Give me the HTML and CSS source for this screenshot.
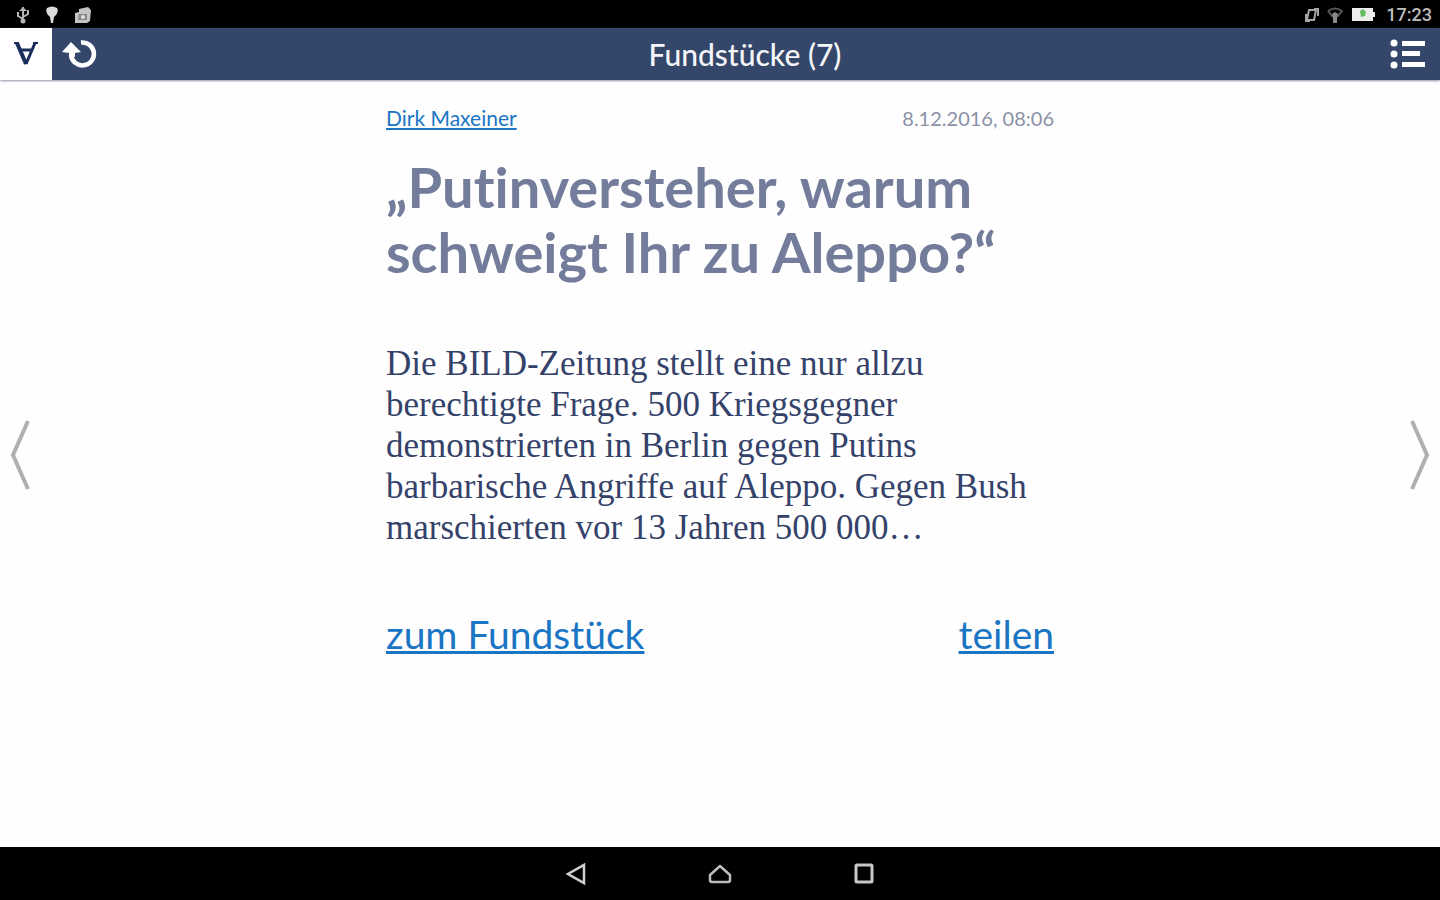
FILE: index.html
```html
<!DOCTYPE html>
<html lang="de">
<head>
<meta charset="utf-8">
<meta name="viewport" content="width=device-width, initial-scale=1">
<title>Fundstücke (7)</title>
<link rel="stylesheet" href="styles.css">
</head>
<body>
<div class="status-bar">
  <div class="status-icons">
    <svg width="14" height="18" viewBox="0 0 14 18" fill="none" stroke="#b4b4b4" stroke-width="2"><path d="M7 1v15M2 6v4l5 3M12 4v4l-5 3"/><path d="M3 5l4-4 4 4z" fill="#b4b4b4" stroke="none"/><circle cx="7" cy="15" r="1.5"/></svg>
    <svg width="14" height="18" viewBox="0 0 14 18" fill="#dcdcdc"><path d="M2 2q5-3 10 0 2 3-1 7l-2 2-1 6H6l-1-6-2-2Q0 5 2 2z"/></svg>
    <svg width="18" height="18" viewBox="0 0 18 18" fill="#c4c4c4"><path d="M5 3l9-2 3 3-1 11-3 2H1V7l4-1z"/><path d="M5 8h8v6H4z" fill="#888"/><circle cx="9" cy="11" r="2" fill="#ddd"/></svg>
  </div>
  <div class="status-info">
    <svg width="14" height="18" viewBox="0 0 14 18" fill="none" stroke="#a5a5a5" stroke-width="2"><path d="M4 4h7L9 14H2zM1 8v7h4M13 10V3H9"/></svg>
    <svg width="16" height="18" viewBox="0 0 16 18" fill="none" stroke="#555" stroke-width="2"><path d="M1 5q7-5 14 0l-5 6M1 5l5 6"/><path d="M5 8l3-2 3 2-1 3v6H6v-6z" fill="#8a8a8a" stroke="none"/></svg>
    <svg width="25" height="18" viewBox="0 0 25 18"><path d="M1 2h21v4h2v5h-2v4H1z" fill="#ededed"/><path d="M9 5l3-2 3 3-1 4-4 1z" fill="#63bd5d"/></svg>
    <time class="clock">17:23</time>
  </div>
</div>
<header class="app-bar">
  <div class="app-actions">
    <button class="brand" type="button" aria-label="Startseite">
      <svg width="26" height="30" viewBox="0 0 26 30" fill="none" stroke="#1c2f5c"><path d="M4 4l9 21" stroke-width="4"/><path d="M22 4l-9 21M7 11h12" stroke-width="3"/><path d="M1 4h5M20 4h5" stroke-width="2"/></svg>
    </button>
    <button class="icon-button" type="button" aria-label="Aktualisieren">
      <svg width="36" height="32" viewBox="0 0 36 32" fill="none"><path d="M19 4.500A11.500 11.500 0 1 1 9 17" stroke="#fff" stroke-width="4.500"/><path d="M0 14L9 4l10 10-6 1v4H7v-4z" fill="#fff"/></svg>
    </button>
  </div>
  <h1 class="app-title">Fundstücke (7)</h1>
  <button class="icon-button menu" type="button" aria-label="Menü">
    <svg width="36" height="30" viewBox="0 0 36 30" fill="#fff"><circle cx="4" cy="4" r="3.500"/><circle cx="4" cy="15" r="3.500"/><circle cx="4" cy="26" r="3.500"/><path d="M12 2h23v5H12zM12 12h18v5H12zM12 23h23v5H12z"/></svg>
  </button>
</header>
<main class="reader">
  <button class="pager" type="button" aria-label="Zurück">
    <svg width="24" height="74" viewBox="0 0 24 74" fill="none" stroke="#b0b0b0" stroke-width="4"><path d="M20 3L5 37l15 34"/></svg>
  </button>
  <article class="article">
    <div class="meta"><a href="#autor">Dirk Maxeiner</a><time class="date" datetime="2016-12-08T08:06">8.12.2016, 08:06</time></div>
    <h2 class="headline">„Putinversteher, warum schweigt Ihr zu Aleppo?“</h2>
    <p class="teaser">Die BILD-Zeitung stellt eine nur allzu berechtigte Frage. 500 Kriegsgegner demonstrierten in Berlin gegen Putins barbarische Angriffe auf Aleppo. Gegen Bush marschierten vor 13 Jahren 500 000…</p>
    <div class="links"><a href="#fundstueck">zum Fundstück</a><a href="#teilen">teilen</a></div>
  </article>
  <button class="pager" type="button" aria-label="Weiter">
    <svg width="24" height="74" viewBox="0 0 24 74" fill="none" stroke="#b0b0b0" stroke-width="4"><path d="M4 3l15 34L4 71"/></svg>
  </button>
</main>
<nav class="system-nav" aria-label="System">
  <button type="button" aria-label="Zurück"><svg width="24" height="24" viewBox="0 0 24 24" fill="none" stroke="#d0d0d0" stroke-width="2.500"><path d="M20 3v18L4 12z"/></svg></button>
  <button type="button" aria-label="Start"><svg width="24" height="24" viewBox="0 0 24 24" fill="none" stroke="#bcbcbc" stroke-width="2.500" stroke-linejoin="round"><path d="M12 4L2 13v5q0 2 2 2h16q2 0 2-2v-5z"/></svg></button>
  <button type="button" aria-label="Übersicht"><svg width="24" height="24" viewBox="0 0 24 24" fill="none" stroke="#c8c8c8" stroke-width="3"><rect x="4" y="3" width="16" height="17" rx="1"/></svg></button>
</nav>
</body>
</html>
```
FILE: styles.css
```css
* { box-sizing: border-box; }
body {
  display: flex;
  flex-direction: column;
  min-height: 100vh;
  margin: 0;
  background: #fefefe;
  font-family: Lato, "Open Sans", sans-serif;
  font-variant-ligatures: none;
}
h1, h2, p { margin: 0; }
svg { display: block; }
a { color: #1a75c4; text-underline-offset: 2px; }
button {
  display: flex;
  align-items: center;
  justify-content: center;
  padding: 0;
  border: 0;
  background: none;
  cursor: pointer;
}
.status-bar {
  display: flex;
  align-items: center;
  justify-content: space-between;
  height: 28px;
  padding: 2px 8px 0 16px;
  background: #000;
}
.status-icons { display: flex; gap: 15px; }
.status-info { display: flex; align-items: center; gap: 8px; }
.clock {
  margin-left: 2px;
  color: #bdbdbd;
  font: 500 18px/26px Roboto, sans-serif;
}
.app-bar {
  display: grid;
  grid-template-columns: 1fr auto 1fr;
  height: 52px;
  background: #34466a;
  box-shadow: 0 1px 2px #8f93a5;
}
.app-actions { display: flex; gap: 10px; }
.brand { width: 52px; background: #fff; }
.app-title {
  padding-left: 50px;
  color: #f4f6fa;
  font-size: 30px;
  font-weight: 500;
  line-height: 52px;
}
.menu { justify-self: end; padding-right: 14px; }
.reader {
  display: flex;
  flex: 1;
  justify-content: space-between;
  padding: 0 8px;
}
.article {
  width: 668px;
  padding-top: 26px;
}
.meta, .links { display: flex; justify-content: space-between; }
.meta {
  color: #8b91a7;
  font-size: 21px;
  line-height: 24px;
}
.date { font-size: 20px; }
.headline {
  margin-top: 24px;
  color: #737d9b;
  font-size: 56px;
  font-weight: 700;
  line-height: 65px;
}
.teaser {
  margin-top: 59px;
  color: #34426a;
  font: 35px/41px "Liberation Serif", serif;
}
.links {
  margin-top: 62px;
  font-size: 39px;
  line-height: 48px;
}
.pager { width: 24px; padding-bottom: 18px; }
.system-nav {
  display: flex;
  align-items: center;
  justify-content: center;
  gap: 120px;
  height: 53px;
  background: #000;
}
```
